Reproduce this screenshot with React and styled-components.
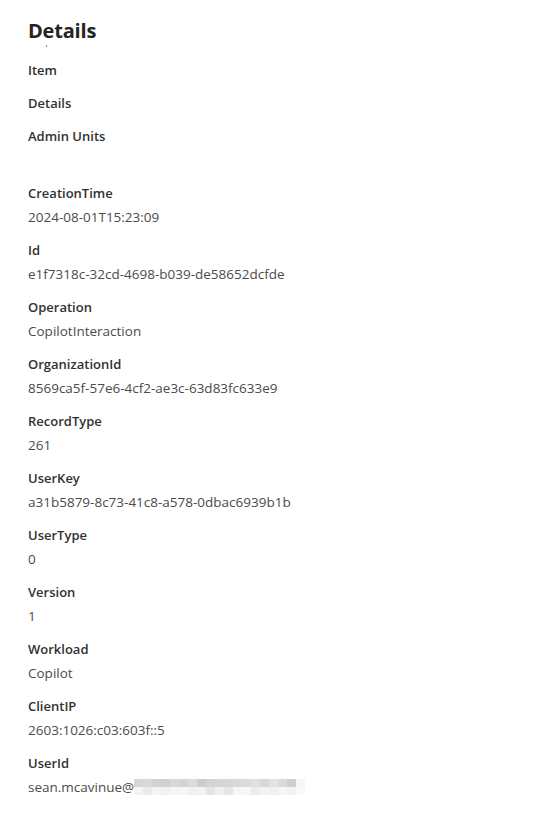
import React from "react";
import styled, { createGlobalStyle } from "styled-components";

const GlobalStyle = createGlobalStyle`
  html, body {
    margin: 0;
    padding: 0;
    background: #ffffff;
  }
  body {
    font-family: "Open Sans", "Noto Sans", "Liberation Sans", sans-serif;
    -webkit-font-smoothing: antialiased;
  }
`;

const navItems = ["Item", "Details", "Admin Units"];

const fields = [
  { label: "CreationTime", value: "2024-08-01T15:23:09" },
  { label: "Id", value: "e1f7318c-32cd-4698-b039-de58652dcfde" },
  { label: "Operation", value: "CopilotInteraction" },
  { label: "OrganizationId", value: "8569ca5f-57e6-4cf2-ae3c-63d83fc633e9" },
  { label: "RecordType", value: "261" },
  { label: "UserKey", value: "a31b5879-8c73-41c8-a578-0dbac6939b1b" },
  { label: "UserType", value: "0" },
  { label: "Version", value: "1" },
  { label: "Workload", value: "Copilot" },
  { label: "ClientIP", value: "2603:1026:c03:603f::5" },
];

// greys of the pixelated (redacted) part of the e-mail
const blurTop = [
  "#d6d6d6", "#d9d9d9", "#d2d2d2", "#cfcfcf", "#d8d8d8", "#d3d3d3", "#dcdcdc", "#cccccc",
  "#d4d4d4", "#d5d5d5", "#d7d7d7", "#d9d9d9", "#dbdbdb", "#e0e0e0", "#d8d8d8", "#e3e3e3",
  "#dadada", "#cfcfcf", "#f6f6f6",
];
const blurBottom = [
  "#f4f4f4", "#ebebeb", "#f4f4f4", "#f1f1f1", "#f5f5f5", "#f7f7f7", "#f0f0f0", "#f3f3f3",
  "#e4e4e4", "#efefef", "#e6e6e6", "#f6f6f6", "#f7f7f7", "#ececec", "#f3f3f3", "#f0f0f0",
  "#f5f5f5", "#f2f2f2", "#fafafa",
];

const App = () => {
  return (
    <Page>
      <GlobalStyle />
      <Title>Details</Title>
      <Dot />
      <Nav>
        {navItems.map((x) => (
          <NavItem key={x}>{x}</NavItem>
        ))}
      </Nav>
      <Fields>
        {fields.map((f) => (
          <Field key={f.label}>
            <Label>{f.label}</Label>
            <Value>{f.value}</Value>
          </Field>
        ))}
        <Field>
          <Label>UserId</Label>
          <Value>
            sean.mcavinue@
            <Redacted>
              <BlurRow>
                {blurTop.map((c, i) => (
                  <BlurCell key={i} style={{ background: c }} />
                ))}
              </BlurRow>
              <BlurRow>
                {blurBottom.map((c, i) => (
                  <BlurCell key={i} style={{ background: c }} />
                ))}
              </BlurRow>
            </Redacted>
          </Value>
        </Field>
      </Fields>
    </Page>
  );
};

const Page = styled.div`
  padding: 17px 28px 0;
  width: 560px;
  box-sizing: border-box;
`;

const Title = styled.h1`
  margin: 0;
  font-size: 20px;
  line-height: 28px;
  font-weight: 700;
  color: #242424;
  letter-spacing: -0.2px;
`;

const Dot = styled.div`
  width: 1px;
  height: 2px;
  margin: 0 0 0 18px;
  background: #8a8a8a;
`;

const Nav = styled.ul`
  list-style: none;
  margin: 13px 0 0;
  padding: 0;
  display: flex;
  flex-direction: column;
  gap: 13px;
`;

const NavItem = styled.li`
  font-size: 13px;
  line-height: 20px;
  font-weight: 600;
  color: #323130;
`;

const Fields = styled.div`
  margin-top: 37px;
  display: flex;
  flex-direction: column;
  gap: 13px;
`;

const Field = styled.div`
  display: flex;
  flex-direction: column;
  gap: 4px;
`;

const Label = styled.div`
  font-size: 13px;
  line-height: 20px;
  font-weight: 600;
  color: #323130;
`;

const Value = styled.div`
  font-size: 13.5px;
  line-height: 20px;
  font-weight: 400;
  color: #4d4b49;
  display: flex;
  align-items: flex-start;
`;

const Redacted = styled.div`
  display: flex;
  flex-direction: column;
  margin-top: 2px;
`;

const BlurRow = styled.div`
  display: flex;
`;

const BlurCell = styled.div`
  width: 9px;
  height: 8px;
`;

export default App;
